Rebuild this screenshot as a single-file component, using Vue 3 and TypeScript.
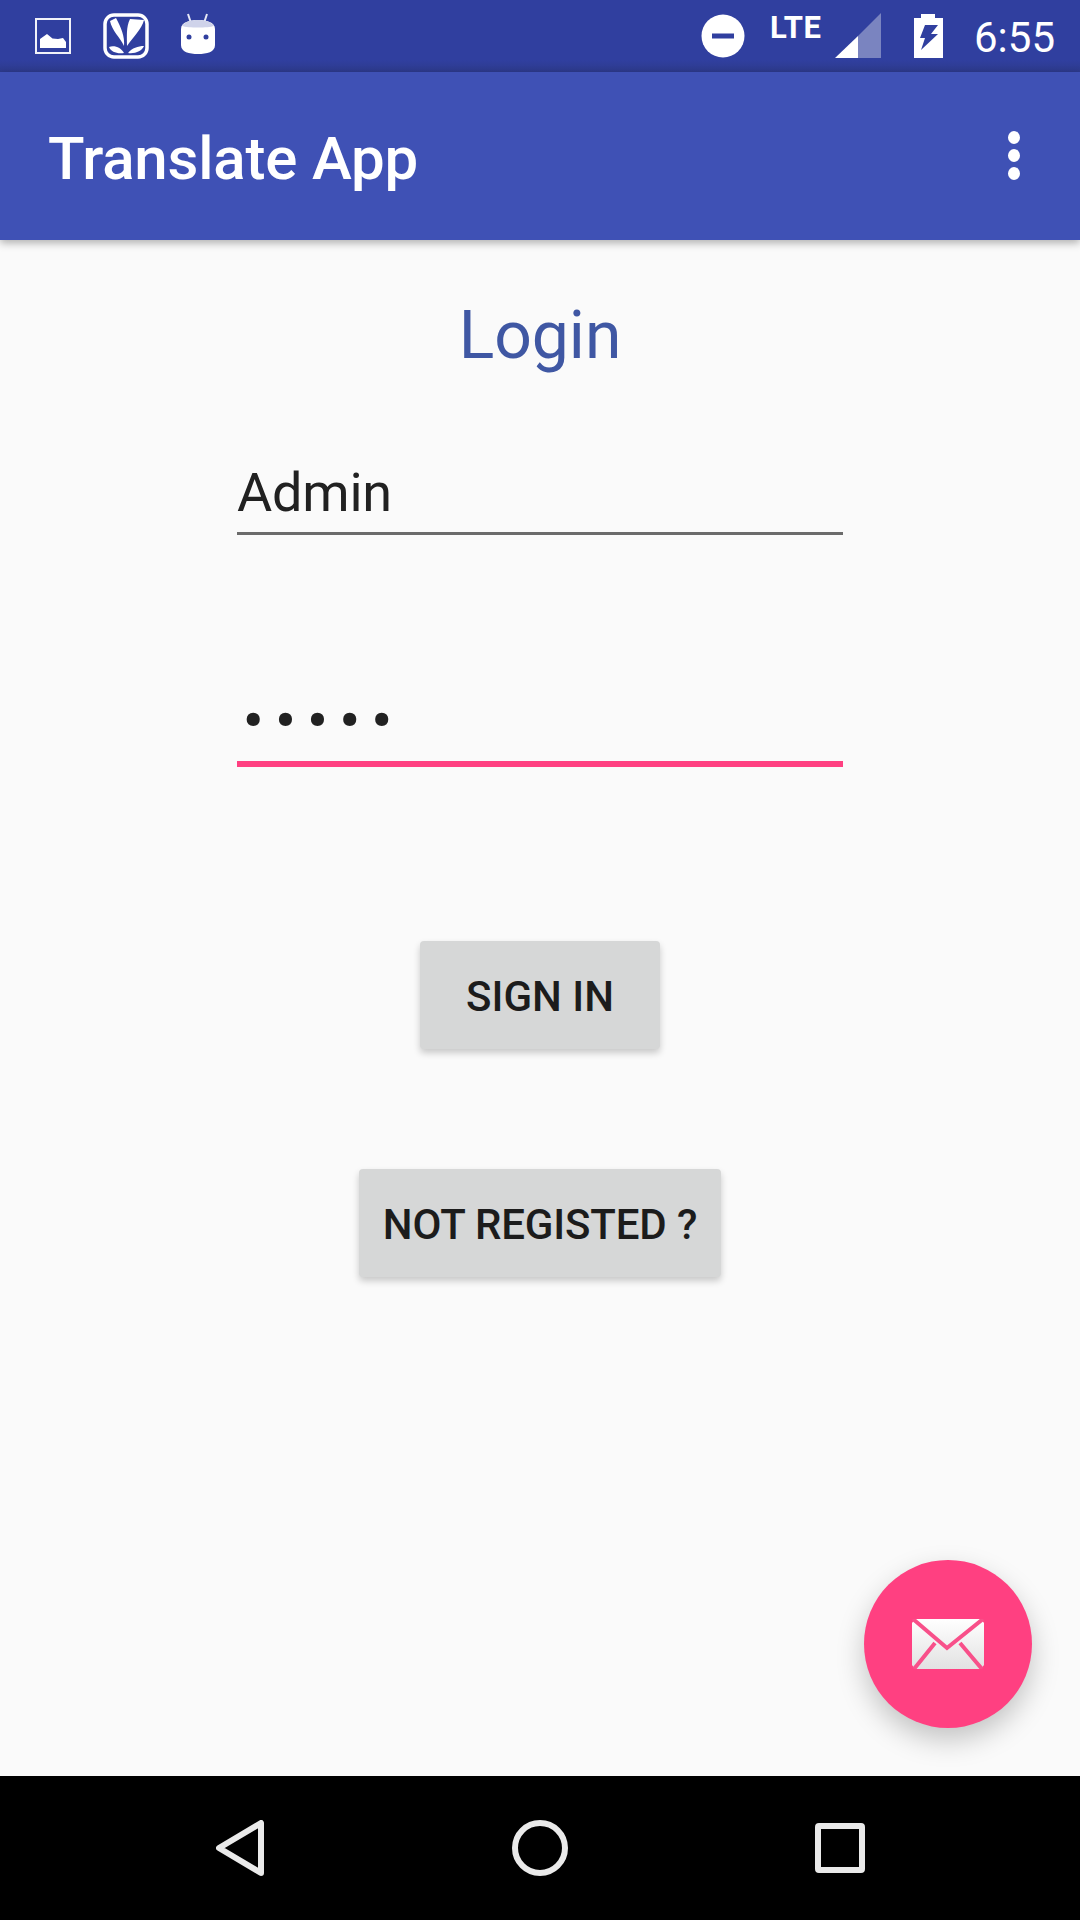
<script setup lang="ts">
const title = 'Translate App'
const username = 'Admin'
const password = '•••••'
</script>

<template>
  <div class="screen">
    <div class="status-bar">
      <svg class="ic-image" width="36" height="36" viewBox="0 0 36 36">
        <rect x="1" y="1" width="34" height="34" fill="none" stroke="#f1f2f9" stroke-width="2" />
        <path d="M5 21L12 16L17.500 20.500L23 21L28 20L31 24V30H5Z" fill="#fff" />
      </svg>
      <svg class="ic-saavn" width="46" height="46" viewBox="0 0 46 46">
        <rect x="2" y="2" width="42" height="42" rx="9" fill="none" stroke="#fff" stroke-width="3.500" />
        <path d="M7 8L13 5C18 14 22 24 21 33C17 24 9 18 7 8Z" fill="#fff" />
        <path d="M27 6L41 7C39 16 30 24 24 33C24 23 23 14 27 6Z" fill="#fff" />
        <path d="M6 34C12 32 18 35 21 40C14 41 8 39 6 34Z" fill="#fff" />
        <path d="M25 40C29 35 35 33 41 33C39 38 32 41 25 40Z" fill="#fff" />
      </svg>
      <svg class="ic-android" width="36" height="42" viewBox="0 0 36 42">
        <path d="M8 1L11 10M27 1L24 10" stroke="#e6e8f5" stroke-width="2" />
        <path d="M1 16C1 9 10 7 18 7C26 7 35 9 35 16V32C35 39 27 41 18 41C9 41 1 39 1 32Z" fill="#fff" />
        <path d="M2 13C4 9 11 7 18 7C25 7 32 9 34 13C28 15 8 15 2 13Z" fill="#cfd3ea" />
        <circle cx="9" cy="24" r="2.500" fill="#303f9f" />
        <circle cx="26" cy="24" r="2.500" fill="#303f9f" />
      </svg>
      <div class="spacer"></div>
      <svg class="ic-dnd" width="44" height="44" viewBox="0 0 44 44">
        <circle cx="22" cy="22" r="21.500" fill="#fff" />
        <rect x="11" y="19.500" width="22" height="5" fill="#303f9f" />
      </svg>
      <span class="lte">LTE</span>
      <svg class="ic-signal" width="46" height="46" viewBox="0 0 46 46">
        <path d="M46 0V45H23V23Z" fill="#7a84c0" />
        <path d="M0 45L23 23V45Z" fill="#fff" />
      </svg>
      <svg class="ic-battery" width="29" height="44" viewBox="0 0 29 44">
        <path fill-rule="evenodd" d="M7 0H21V4H29V44H0V4H7ZM11 11L6 24H11L7 36L24 20H17L24 11Z" fill="#fff" />
      </svg>
      <span class="clock">6:55</span>
    </div>

    <header class="app-bar">
      <span class="app-title">{{ title }}</span>
      <div class="overflow">
        <i></i><i></i><i></i>
      </div>
    </header>

    <main class="content">
      <h1 class="heading">Login</h1>
      <div class="field">
        <div class="value">{{ username }}</div>
      </div>
      <div class="field focused">
        <div class="value dots">{{ password }}</div>
      </div>
      <button class="btn sign-in">SIGN IN</button>
      <button class="btn register">NOT REGISTED ?</button>

      <div class="fab">
        <svg width="72" height="50" viewBox="0 0 72 50">
          <defs>
            <linearGradient id="mail" x1="0" y1="0" x2="0" y2="1">
              <stop offset="0" stop-color="#ffffff" />
              <stop offset="1" stop-color="#e2e2e2" />
            </linearGradient>
          </defs>
          <path d="M3 0H69L72 4V46L69 50H3L0 46V4Z" fill="url(#mail)" />
          <path d="M1 0L35 29L71 0M23 24L2 50M48 24L70 50" fill="none" stroke="#f8508a" stroke-width="4" />
        </svg>
      </div>
    </main>

    <nav class="nav-bar">
      <svg width="48" height="56" viewBox="0 0 48 56">
        <path d="M45 3V53L3 28Z" fill="none" stroke="#eaeaea" stroke-width="6" stroke-linejoin="round" />
      </svg>
      <svg width="56" height="56" viewBox="0 0 56 56">
        <circle cx="28" cy="28" r="25" fill="none" stroke="#eaeaea" stroke-width="6" />
      </svg>
      <svg width="50" height="50" viewBox="0 0 50 50">
        <rect x="3" y="3" width="44" height="44" rx="1" fill="none" stroke="#eaeaea" stroke-width="6" />
      </svg>
    </nav>
  </div>
</template>

<style scoped>
.screen {
  width: 1080px;
  height: 1920px;
  display: flex;
  flex-direction: column;
  background: #fafafa;
  font-family: Roboto, "Liberation Sans", sans-serif;
  overflow: hidden;
}

.status-bar {
  height: 72px;
  flex: none;
  display: flex;
  align-items: center;
  padding: 0 25px 0 35px;
  box-sizing: border-box;
  background: linear-gradient(#303f9f 0, #303f9f 60px, #2d3a8c 72px);
  color: #fff;
}

.ic-saavn { margin-left: 32px; }
.ic-android { margin-left: 31px; margin-bottom: 5px; }
.spacer { flex: 1; }
.ic-dnd { margin-right: 25px; }

.lte {
  font-size: 31px;
  font-weight: 700;
  width: 62px;
  margin-bottom: 18px;
  letter-spacing: 0.5px;
}

.ic-signal { margin-left: 3px; }
.ic-battery { margin-left: 33px; }

.clock {
  font-size: 42px;
  margin-left: 31px;
  margin-top: 2px;
}

.app-bar {
  height: 168px;
  flex: none;
  display: flex;
  align-items: center;
  justify-content: space-between;
  padding: 4px 60px 0 48px;
  box-sizing: border-box;
  background: #3f51b5;
  color: #fff;
  box-shadow: 0 3px 8px rgba(0, 0, 0, 0.3);
  position: relative;
  z-index: 1;
}

.app-title {
  font-size: 60px;
  font-weight: 500;
  letter-spacing: -0.2px;
}

.overflow {
  display: flex;
  flex-direction: column;
  gap: 5px;
  margin-bottom: 6px;
}

.overflow i {
  display: block;
  width: 12px;
  height: 13px;
  border-radius: 50%;
  background: #fff;
}

.content {
  flex: 1;
  position: relative;
  display: flex;
  flex-direction: column;
  align-items: center;
}

.heading {
  margin: 57px 0 0;
  font-size: 66px;
  line-height: 78px;
  font-weight: 400;
  color: #3f57a3;
}

.field {
  width: 606px;
  height: 103px;
  margin-top: 57px;
  box-sizing: border-box;
  border-bottom: 3px solid #6b6b6b;
}

.field.focused {
  margin-top: 118px;
  height: 114px;
  border-bottom: 6px solid #ff4081;
}

.value {
  font-size: 54px;
  line-height: 64px;
  padding-top: 29px;
  color: #212121;
  letter-spacing: -0.2px;
}

.dots {
  font-size: 56px;
  font-weight: 700;
  letter-spacing: 12px;
  padding-top: 36px;
  padding-left: 6px;
}

.btn {
  display: block;
  height: 108px;
  border: none;
  border-radius: 4px;
  background: #d6d7d7;
  color: #1c1c1c;
  font-family: inherit;
  font-size: 42px;
  font-weight: 500;
  padding: 2px 0 0;
  box-shadow: 0 4px 7px rgba(0, 0, 0, 0.2);
}

.sign-in {
  width: 240px;
  margin-top: 174px;
}

.register {
  width: 362px;
  margin-top: 120px;
  letter-spacing: -0.15px;
}

.fab {
  position: absolute;
  right: 48px;
  bottom: 48px;
  width: 168px;
  height: 168px;
  border-radius: 50%;
  background: #ff4081;
  display: flex;
  align-items: center;
  justify-content: center;
  box-shadow: 0 12px 28px rgba(0, 0, 0, 0.22);
}

.nav-bar {
  height: 144px;
  flex: none;
  display: flex;
  align-items: center;
  justify-content: space-between;
  padding: 0 215px 0 216px;
  box-sizing: border-box;
  background: #000;
}
</style>
